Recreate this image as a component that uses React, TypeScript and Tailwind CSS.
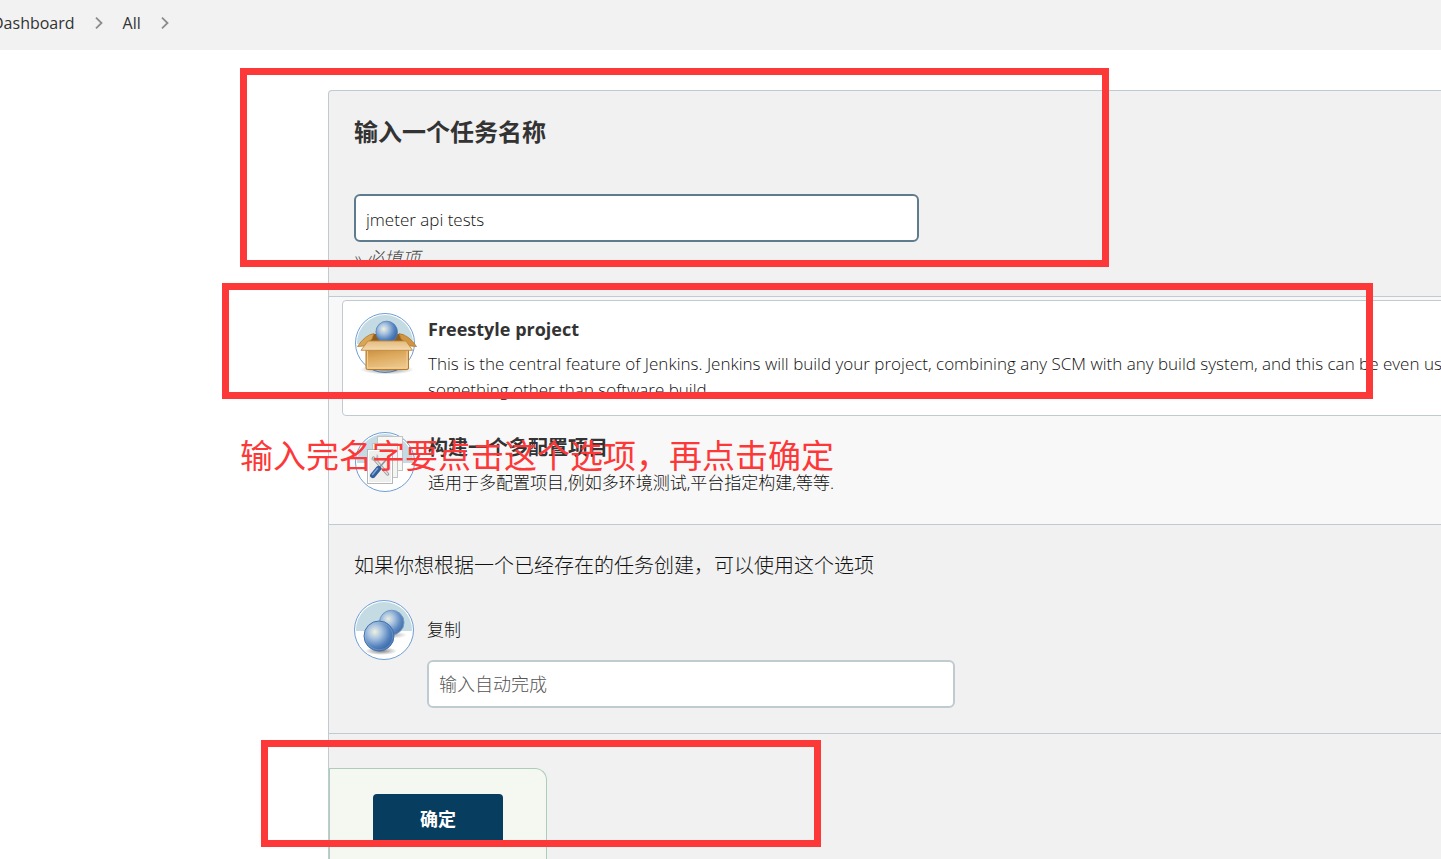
import React, { useState } from 'react';

const IconDisc: React.FC<{ id: string; children: React.ReactNode }> = ({ id, children }) => (
  <svg viewBox="0 0 60 60" className="w-[60px] h-[60px] shrink-0 overflow-visible" aria-hidden="true">
    <defs>
      <clipPath id={`${id}-clip`}>
        <circle cx="30" cy="30" r="28" />
      </clipPath>
      <radialGradient id={`${id}-ball`} cx="0.36" cy="0.36" r="0.66">
        <stop offset="0" stopColor="#eef1e0" />
        <stop offset="0.35" stopColor="#a9c3e0" />
        <stop offset="0.75" stopColor="#5583be" />
        <stop offset="1" stopColor="#3a68a8" />
      </radialGradient>
      <radialGradient id={`${id}-shadow`}>
        <stop offset="0" stopColor="#000" stopOpacity="0.5" />
        <stop offset="1" stopColor="#000" stopOpacity="0" />
      </radialGradient>
    </defs>
    <circle cx="30" cy="30" r="29.5" fill="#fff" stroke="#6d9fd6" />
    <rect width="60" height="31" fill="#c5dbe3" clipPath={`url(#${id}-clip)`} />
    {children}
  </svg>
);

const FreestyleIcon = () => (
  <IconDisc id="free">
    <defs>
      <linearGradient id="free-box" x1="0" y1="0" x2="0.3" y2="1">
        <stop offset="0" stopColor="#c08432" />
        <stop offset="0.5" stopColor="#dca85c" />
        <stop offset="1" stopColor="#ebc486" />
      </linearGradient>
      <linearGradient id="free-flap" x1="0" y1="0" x2="0" y2="1">
        <stop offset="0" stopColor="#e3ba7e" />
        <stop offset="1" stopColor="#f4dbb0" />
      </linearGradient>
    </defs>
    <ellipse cx="32" cy="56.5" rx="27" ry="5" fill="url(#free-shadow)" />
    <path d="M16 21 L48 21 L51 29 L13 29Z" fill="#8e5d20" />
    <path d="M19 20.5 Q10 22 2.5 33.5 L9 33 L17 26Z" fill="#d9a556" stroke="#b57a29" strokeWidth="0.8" />
    <path d="M44 20.5 Q54 22 61.5 33.5 L55 33 L46 26Z" fill="#cf9540" stroke="#b57a29" strokeWidth="0.8" />
    <circle cx="31.7" cy="19" r="10.8" fill="url(#free-ball)" stroke="#5783bb" strokeWidth="0.8" />
    <rect x="11" y="33" width="42.5" height="23.5" rx="1.5" fill="url(#free-box)" stroke="#b57a29" />
    <path d="M12.5 38 V55 H52 V38" fill="none" stroke="#f5d59e" strokeWidth="0.8" />
    <path d="M13 28 H51 L57.5 37.3 H6Z" fill="url(#free-flap)" stroke="#c18a3e" strokeWidth="0.9" />
  </IconDisc>
);

const MatrixIcon = () => (
  <IconDisc id="matrix">
    <rect x="22.5" y="4.5" width="25" height="34" fill="#f7f7f6" stroke="#c2c4c4" />
    <rect x="17.5" y="11.5" width="25" height="34" fill="#f4f4f3" stroke="#c2c4c4" />
    <rect x="12.5" y="17.5" width="25" height="34" fill="#eeeeed" stroke="#b5b7b7" />
    <rect x="13.5" y="18.5" width="23" height="32" fill="none" stroke="#fff" />
    <path d="M18.5 26 L32.5 42" stroke="#999d9f" strokeWidth="3.4" strokeLinecap="round" />
    <path d="M18.5 26 L32.5 42" stroke="#dcdedf" strokeWidth="1.6" strokeLinecap="round" />
    <path d="M15.8 26.5 a4 4 0 0 0 6.4 1.6 a4 4 0 0 0 -0.3 -6 l-0.7 3.4 l-2.6 1z" fill="#b7babb" />
    <path d="M24 36 L33 25.5 L35.5 23.5" stroke="#8f969a" strokeWidth="1.7" fill="none" strokeLinecap="round" />
    <path d="M17.8 43.5 L23.6 36.6" stroke="#355f9c" strokeWidth="5.4" strokeLinecap="round" />
    <path d="M17.6 42.4 L22.5 36.5" stroke="#82a8d8" strokeWidth="1.5" strokeLinecap="round" />
  </IconDisc>
);

const CopyItemIcon = () => (
  <IconDisc id="copy">
    <ellipse cx="39" cy="35" rx="14" ry="3.5" fill="url(#copy-shadow)" opacity="0.6" />
    <circle cx="37.7" cy="22.5" r="12.3" fill="url(#copy-ball)" stroke="#6b93c5" opacity="0.9" />
    <ellipse cx="27" cy="51" rx="16" ry="4" fill="url(#copy-shadow)" />
    <circle cx="25" cy="36" r="15" fill="url(#copy-ball)" stroke="#4272b0" />
    <circle cx="25" cy="36" r="13.9" fill="none" stroke="#a9c3e2" strokeWidth="0.7" opacity="0.5" />
  </IconDisc>
);

const Chevron = () => (
  <svg viewBox="0 0 8 12" className="w-2 h-3" fill="none" stroke="#8c8c8c" strokeWidth="1.8" aria-hidden="true">
    <path d="M1 0.7 L6.5 6 L1 11.3" />
  </svg>
);

export default function App() {
  const [name, setName] = useState('jmeter api tests');
  const [from, setFrom] = useState('');

  return (
    <div className="relative min-h-screen flex flex-col overflow-hidden bg-white text-[#111] text-[17px] font-light font-['Open_Sans','Noto_Sans_CJK_SC',sans-serif]">
      <nav className="h-[50px] shrink-0 flex items-center bg-[#f2f2f2] text-base leading-6 font-medium text-[#333] pb-1">
        <a href="#dashboard" className="-ml-2">Dashboard</a>
        <span className="mx-5"><Chevron /></span>
        <a href="#all">All</a>
        <span className="mx-5"><Chevron /></span>
      </nav>

      <form
        onSubmit={(e) => e.preventDefault()}
        className="flex-1 flex flex-col mt-10 ml-[328px] -mr-24 border border-b-0 border-[#bfcbd1] rounded-t bg-[#f1f1f1]"
      >
        <section className="pt-[25px] px-[25px] pb-[26px]">
          <h1 className="text-2xl leading-8 font-bold text-[#333]">
            <label htmlFor="name">输入一个任务名称</label>
          </h1>
          <input
            id="name"
            type="text"
            value={name}
            onChange={(e) => setName(e.target.value)}
            className="block mt-[46px] w-[565px] h-12 px-2.5 pt-0.5 bg-white border-2 border-[#5f7b8e] rounded-md outline-none"
          />
          <p className="mt-1 text-lg leading-6 italic text-[#444]">» 必填项</p>
        </section>

        <ul className="border-t border-[#bfcbd1] bg-[#f8f8f8] pt-[3px] pb-[15px] pl-[13px]">
          <li className="flex gap-[13px] p-3 pr-10 bg-white border border-[#bfcbd1] rounded">
            <FreestyleIcon />
            <div className="pt-0.5">
              <h2 className="text-lg leading-7 font-bold text-[#333]">Freestyle project</h2>
              <p className="mt-2 leading-[26px]">
                This is the central feature of Jenkins. Jenkins will build your project, combining any SCM with any build system, and this can be even used for something other than software build.
              </p>
            </div>
          </li>
          <li className="flex gap-[13px] mt-[3px] p-3 pr-10 border border-transparent rounded">
            <MatrixIcon />
            <div className="pt-0.5">
              <h2 className="text-xl leading-7 font-bold text-[#333]">构建一个多配置项目</h2>
              <p className="mt-2 leading-[26px]">适用于多配置项目,例如多环境测试,平台指定构建,等等.</p>
            </div>
          </li>
        </ul>

        <section className="border-y border-[#bfcbd1] p-[25px]">
          <p className="text-xl leading-8">如果你想根据一个已经存在的任务创建，可以使用这个选项</p>
          <div className="flex gap-[13px] mt-[18px]">
            <CopyItemIcon />
            <div>
              <label htmlFor="from" className="h-[60px] flex items-center">复制</label>
              <input
                id="from"
                type="text"
                value={from}
                onChange={(e) => setFrom(e.target.value)}
                placeholder="输入自动完成"
                className="block w-[528px] h-12 px-2.5 text-lg bg-white border-2 border-[#bfcbd1] rounded-md placeholder:text-[#555]"
              />
            </div>
          </div>
        </section>

        <div className="flex-1 mt-[34px] w-[218px] pt-[25px] pl-[43px] bg-[#f5f7f1] border border-b-0 border-[#abcdbb] rounded-tr-xl">
          <button type="submit" className="block w-[130px] h-[50px] rounded bg-[#073d5f] text-white text-lg font-bold">
            确定
          </button>
        </div>
      </form>

      {/* red markers */}
      <div className="absolute left-[240px] top-[68px] w-[869px] h-[199px] border-[7px] border-[#fd3838] pointer-events-none" />
      <div className="absolute left-[222px] top-[283px] w-[1151px] h-[116px] border-[7px] border-[#fd3838] pointer-events-none" />
      <div className="absolute left-[261px] top-[740px] w-[560px] h-[107px] border-[7px] border-[#fd3838] pointer-events-none" />
      <p className="absolute left-[240px] top-[432px] text-[33px] leading-[48px] font-normal text-[#fd3838] whitespace-nowrap pointer-events-none">
        输入完名字要点击这个选项，再点击确定
      </p>
    </div>
  );
}
